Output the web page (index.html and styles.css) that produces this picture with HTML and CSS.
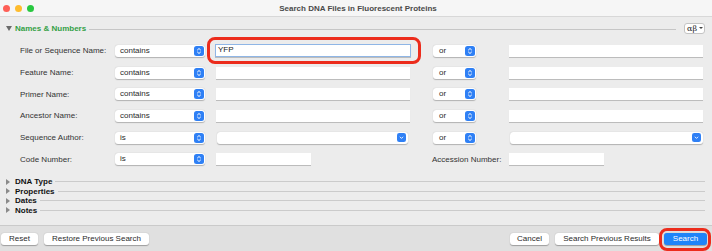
FILE: index.html
```html
<!DOCTYPE html>
<html lang="en">

  <head>
    <meta charset="UTF-8">
    <title>Search DNA Files in Fluorescent Proteins</title>
    <link rel="stylesheet" href="styles.css">
  </head>

  <body>
    <div class="window">
      <div class="titlebar">
        <div class="lights">
          <span class="light red"></span>
          <span class="light yellow"></span>
          <span class="light green"></span>
        </div>
        <div class="title">Search DNA Files in Fluorescent Proteins</div>
      </div>

      <div class="content">
        <div class="section-head">
          <span class="tri-down"></span>
          <span class="section-title">Names &amp; Numbers</span>
          <span class="rule"></span>
          <button class="greek">αβ <span class="caret"></span></button>
        </div>

        <div class="grid">
          <!-- row 1 -->
          <label>File or Sequence Name:</label>
          <div class="cell"><div class="select wide">contains
            <svg class="stepper" viewBox="0 0 10 10"><rect width="10" height="10" rx="2.5"/><path d="M3.2 4.2L5 2.5L6.8 4.2M3.2 5.8L5 7.5L6.8 5.8"/></svg></div></div>
          <div class="cell"><div class="field focused">YFP<span class="mark"></span></div></div>
          <div class="cell"><div class="select small">or
            <svg class="stepper" viewBox="0 0 10 10"><rect width="10" height="10" rx="2.5"/><path d="M3.2 4.2L5 2.5L6.8 4.2M3.2 5.8L5 7.5L6.8 5.8"/></svg></div></div>
          <div class="cell"><div class="field"></div></div>

          <!-- row 2 -->
          <label>Feature Name:</label>
          <div class="cell"><div class="select wide">contains
            <svg class="stepper" viewBox="0 0 10 10"><rect width="10" height="10" rx="2.5"/><path d="M3.2 4.2L5 2.5L6.8 4.2M3.2 5.8L5 7.5L6.8 5.8"/></svg></div></div>
          <div class="cell"><div class="field"></div></div>
          <div class="cell"><div class="select small">or
            <svg class="stepper" viewBox="0 0 10 10"><rect width="10" height="10" rx="2.5"/><path d="M3.2 4.2L5 2.5L6.8 4.2M3.2 5.8L5 7.5L6.8 5.8"/></svg></div></div>
          <div class="cell"><div class="field"></div></div>

          <!-- row 3 -->
          <label>Primer Name:</label>
          <div class="cell"><div class="select wide">contains
            <svg class="stepper" viewBox="0 0 10 10"><rect width="10" height="10" rx="2.5"/><path d="M3.2 4.2L5 2.5L6.8 4.2M3.2 5.8L5 7.5L6.8 5.8"/></svg></div></div>
          <div class="cell"><div class="field"></div></div>
          <div class="cell"><div class="select small">or
            <svg class="stepper" viewBox="0 0 10 10"><rect width="10" height="10" rx="2.5"/><path d="M3.2 4.2L5 2.5L6.8 4.2M3.2 5.8L5 7.5L6.8 5.8"/></svg></div></div>
          <div class="cell"><div class="field"></div></div>

          <!-- row 4 -->
          <label>Ancestor Name:</label>
          <div class="cell"><div class="select wide">contains
            <svg class="stepper" viewBox="0 0 10 10"><rect width="10" height="10" rx="2.5"/><path d="M3.2 4.2L5 2.5L6.8 4.2M3.2 5.8L5 7.5L6.8 5.8"/></svg></div></div>
          <div class="cell"><div class="field"></div></div>
          <div class="cell"><div class="select small">or
            <svg class="stepper" viewBox="0 0 10 10"><rect width="10" height="10" rx="2.5"/><path d="M3.2 4.2L5 2.5L6.8 4.2M3.2 5.8L5 7.5L6.8 5.8"/></svg></div></div>
          <div class="cell"><div class="field"></div></div>

          <!-- row 5 -->
          <label>Sequence Author:</label>
          <div class="cell"><div class="select wide">is
            <svg class="stepper" viewBox="0 0 10 10"><rect width="10" height="10" rx="2.5"/><path d="M3.2 4.2L5 2.5L6.8 4.2M3.2 5.8L5 7.5L6.8 5.8"/></svg></div></div>
          <div class="cell"><div class="combo left">
            <svg class="chevron" viewBox="0 0 10 10"><rect width="10" height="10" rx="2.5"/><path d="M3.2 4.2L5 6L6.8 4.2"/></svg></div></div>
          <div class="cell"><div class="select small">or
            <svg class="stepper" viewBox="0 0 10 10"><rect width="10" height="10" rx="2.5"/><path d="M3.2 4.2L5 2.5L6.8 4.2M3.2 5.8L5 7.5L6.8 5.8"/></svg></div></div>
          <div class="cell"><div class="combo right">
            <svg class="chevron" viewBox="0 0 10 10"><rect width="10" height="10" rx="2.5"/><path d="M3.2 4.2L5 6L6.8 4.2"/></svg></div></div>

          <!-- row 6 -->
          <label>Code Number:</label>
          <div class="cell"><div class="select wide">is
            <svg class="stepper" viewBox="0 0 10 10"><rect width="10" height="10" rx="2.5"/><path d="M3.2 4.2L5 2.5L6.8 4.2M3.2 5.8L5 7.5L6.8 5.8"/></svg></div></div>
          <div class="cell"><div class="field short"></div></div>
          <label class="acc">Accession Number:</label>
          <div class="cell"><div class="field short"></div></div>
        </div>

        <div class="collapsed">
          <div class="sub"><span class="tri-right"></span><span class="sub-title">DNA Type</span><span class="rule"></span></div>
          <div class="sub"><span class="tri-right"></span><span class="sub-title">Properties</span><span class="rule"></span></div>
          <div class="sub"><span class="tri-right"></span><span class="sub-title">Dates</span><span class="rule"></span></div>
          <div class="sub"><span class="tri-right"></span><span class="sub-title">Notes</span><span class="rule"></span></div>
        </div>
      </div>

      <div class="footer">
        <button class="btn reset">Reset</button>
        <button class="btn restore">Restore Previous Search</button>
        <span class="spacer"></span>
        <button class="btn cancel">Cancel</button>
        <button class="btn prev">Search Previous Results</button>
        <button class="btn primary">Search<span class="mark"></span></button>
      </div>
    </div>
  </body>

</html>
```

FILE: styles.css
```css
body {
  margin: 0;
  font-family: "Liberation Sans", Arial, sans-serif;
  font-size: 8px;
  color: #2b2b2b;
}

.window {
  width: 712px;
  height: 251px;
  display: flex;
  flex-direction: column;
  background-color: #ececec;
  overflow: hidden;
}

.titlebar {
  height: 16px;
  flex: none;
  display: flex;
  align-items: center;
  position: relative;
  background-color: #f6f6f6;
  border-bottom: 1px solid #d8d8d8;
}

.lights {
  display: flex;
  gap: 5px;
  padding-left: 3px;
}

.light {
  width: 7px;
  height: 7px;
  border-radius: 50%;
}

.red { background-color: #fe5f57; }
.yellow { background-color: #febc2e; }
.green { background-color: #28c840; }

.title {
  flex: 1;
  text-align: center;
  font-weight: bold;
  color: #4a4a4a;
  margin-right: 30px;
}

.content {
  padding-top: 5px;
}

.section-head {
  display: flex;
  align-items: center;
  height: 12px;
  padding-left: 6px;
  padding-right: 7px;
}

.tri-down {
  width: 0;
  height: 0;
  border-left: 3px solid transparent;
  border-right: 3px solid transparent;
  border-top: 5px solid #6a6a6a;
  margin-right: 3px;
}

.section-title {
  font-weight: bold;
  color: #33a046;
}

.rule {
  flex: 1;
  height: 1px;
  background-color: #c6c6c6;
  margin-left: 3px;
  margin-top: 2px;
}

.greek {
  margin-left: 8px;
  width: 21px;
  height: 11px;
  padding: 0 0 0 2px;
  display: flex;
  align-items: center;
  gap: 2px;
  background-color: white;
  border: 1px solid #c4c4c4;
  border-radius: 3px;
  font-family: "DejaVu Serif", serif;
  font-size: 8px;
  color: #222;
}

.caret {
  width: 0;
  height: 0;
  border-left: 2px solid transparent;
  border-right: 2px solid transparent;
  border-top: 2.5px solid #444;
}

.grid {
  display: grid;
  grid-template-columns: 95px 101px 217px 76px 194px;
  grid-auto-rows: 21.7px;
  padding-left: 20px;
  margin-top: 6px;
  align-items: center;
}

.grid label {
  white-space: nowrap;
  color: #333;
}

.cell {
  display: flex;
  align-items: center;
}

.select {
  position: relative;
  height: 12px;
  line-height: 12px;
  padding-left: 5px;
  box-sizing: border-box;
  background-color: white;
  border-radius: 3px;
  box-shadow: 0 0.5px 1px rgba(0, 0, 0, 0.25);
}

.select.wide { width: 90px; }
.select.small { width: 43px; padding-left: 6px; }

.stepper,
.chevron {
  position: absolute;
  right: 1px;
  top: 1px;
  width: 10px;
  height: 10px;
}

.stepper rect,
.chevron rect {
  fill: #2f80f5;
}

.stepper path,
.chevron path {
  fill: none;
  stroke: white;
  stroke-width: 1;
}

.chevron {
  width: 9px;
  height: 9px;
  top: 1.5px;
  right: 2px;
}

.field {
  position: relative;
  width: 194px;
  height: 12px;
  box-sizing: border-box;
  background-color: white;
  box-shadow: 0 0.5px 0.5px rgba(0, 0, 0, 0.2);
}

.field.short { width: 95px; }

.field.focused {
  height: 13px;
  margin-left: -1px;
  width: 196px;
  border: 1.5px solid #8fb6e6;
  padding-left: 2px;
  line-height: 10px;
  color: #222;
}

.field.focused .mark {
  position: absolute;
  left: -9px;
  right: -11px;
  top: -8px;
  bottom: -8px;
  border: 3px solid #ec2c1c;
  border-radius: 8px;
}

.combo {
  position: relative;
  height: 12px;
  background-color: white;
  border-radius: 3px;
  box-shadow: 0 0.5px 1px rgba(0, 0, 0, 0.25);
}

.combo.left { width: 191px; margin-left: 1px; }
.combo.right { width: 193px; margin-left: 1px; }

.grid .acc {
  margin-left: -1px;
}

.collapsed {
  margin-top: 7px;
  padding-left: 6px;
  padding-right: 7px;
}

.sub {
  display: flex;
  align-items: center;
  height: 9.5px;
}

.tri-right {
  width: 0;
  height: 0;
  border-top: 3px solid transparent;
  border-bottom: 3px solid transparent;
  border-left: 4px solid #8a8a8a;
  margin-right: 5px;
}

.sub-title {
  font-weight: bold;
  color: #111;
}

.sub .rule {
  margin-top: 0;
  background-color: #cbcbcb;
}

.footer {
  margin-top: auto;
  height: 26px;
  box-sizing: border-box;
  display: flex;
  align-items: center;
  padding: 0 5px 0 1px;
  gap: 6px;
  background-color: #e0e0e0;
  border-top: 1px solid #cacaca;
}

.spacer {
  flex: 1;
}

.btn {
  position: relative;
  height: 12px;
  padding: 0;
  border: none;
  border-radius: 3px;
  background-color: white;
  box-shadow: 0 0.5px 1px rgba(0, 0, 0, 0.3);
  font-family: "Liberation Sans", Arial, sans-serif;
  font-size: 8px;
  color: #2b2b2b;
}

.reset { width: 37px; }
.restore { width: 105px; }
.cancel { width: 39px; }
.prev { width: 104px; }

.primary {
  width: 43px;
  margin-left: -1px;
  background-color: #1f84f8;
  color: white;
}

.primary .mark {
  position: absolute;
  left: -5px;
  right: -4px;
  top: -5px;
  bottom: -6px;
  border: 3px solid #ec2c1c;
  border-radius: 8px;
}
```
